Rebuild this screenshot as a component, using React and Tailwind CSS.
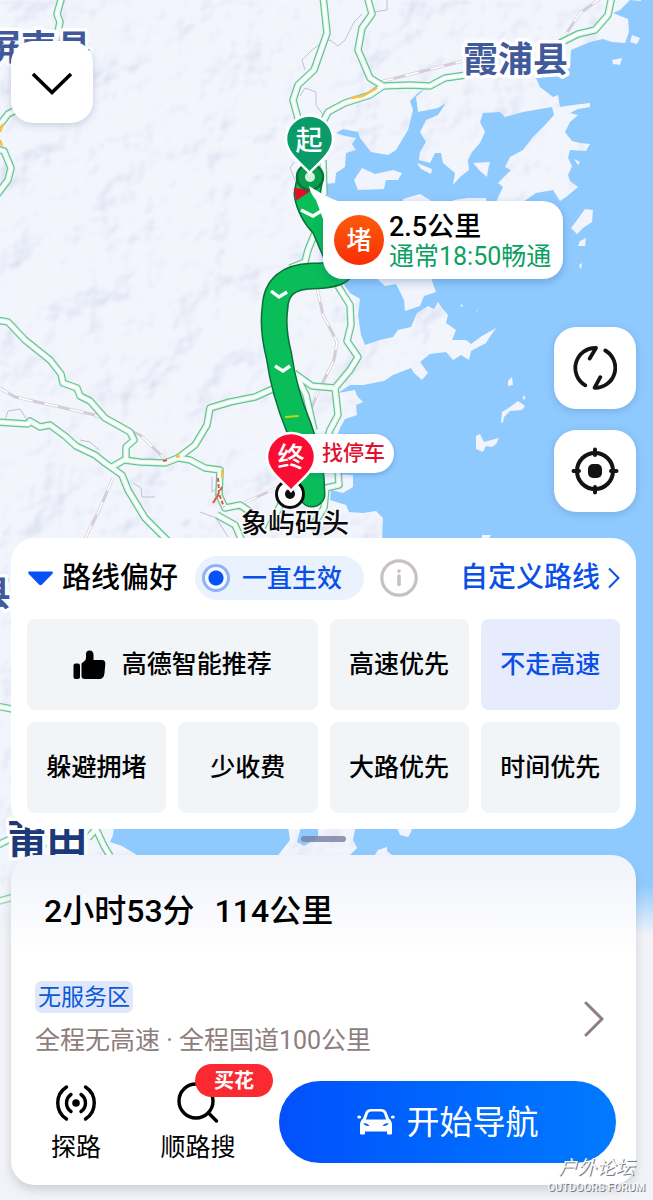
import React from "react";

const roads = [
  "M62 -4L57 14L60 22L55 46",
  "M20 108L8 114L2 122L-4 126",
  "M-4 149L4 151L11 168L8 180L-4 196",
  "M323 -4L327 33L314 70L298 85L293 100L299 122",
  "M367 -4L372 14L362 28L358 50L370 78L383 86L410 85L430 86L445 78L466 75",
  "M383 86L370 95L345 103L328 112L322 124",
  "M612 -4L608 15L595 30L578 34L560 43",
  "M323 160L324 195",
  "M317 228L308 250L305 262L290 268",
  "M-4 320L8 322L25 340L50 360L61 374L63 383L77 388L80 396L90 401L105 418L130 432L134 440L126 447L126 460",
  "M-4 422L28 424L30 421L40 427L50 425L65 436L76 446L95 455L105 463L122 475L128 490L145 518L168 541",
  "M112 467L124 460L140 462L165 463L178 458L190 460L205 468L220 470L219 495L225 508L240 505L252 513",
  "M178 458L195 445L207 425L210 408L230 402L255 397L275 388",
  "M217 515L235 525L242 541",
  "M338 286L350 305L351 325L347 341L358 357L350 370L335 388L312 386L294 373",
  "M335 388L338 415L330 430L326 442",
  "M296 375L306 395L314 430",
  "M338 470L339 485L326 488L324 508L310 530",
  "M284 498L268 530",
  "M-4 576L5 580L-2 590",
  "M-4 706L12 709",
  "M-4 846L12 838L28 846L42 836L52 848",
  "M88 838L96 829L104 846L110 856",
  "M-4 902L14 897",
];

const rails = [
  "M-4 386L15 397L60 407L95 415L140 435L168 462",
  "M113 478L100 508L84 541",
  "M244 503L278 487",
  "M317 288L323 315L337 342L334 360L318 392L310 412",
  "M604 -4L580 13L566 34",
  "M380 82L463 61",
];

const borders = [
  "M305 70L302 60L312 50L323 42L330 40L338 46L345 40L354 22L362 14",
  "M300 96L305 88L316 92L316 105L324 116",
  "M387 -2L387 10L374 12",
  "M294 162L290 168L295 180",
  "M5 420L8 411L20 409L27 420",
  "M80 440L90 442L99 450M133 483L141 488L142 497L155 497",
  "M212 477L212 492L218 487M200 512L216 518L228 537",
];

const sea = [
  "M640 -4L641 1L630 0L620 10L613 13L628 19L629 32L625 43L612 42L603 39L590 42L571 50L570 68L536 78L540 87L553 97L558 95L560 107L573 105L590 103V107L578 109L570 113L578 115L570 122L565 132L572 141L580 143L590 144L586 151L570 150L568 158L572 166L568 175L570 181L578 187L566 197L560 201L553 190L536 193L523 202L496 202L503 187L498 183L511 170L505 167L510 157L523 150L533 137L545 125L554 115L552 107L523 112L505 117L500 112L483 113L480 122L485 132L480 143L472 152L468 160L469 170L460 177L453 185L455 173L443 163L441 153L435 153L430 163L419 160L420 152L426 142L420 132L426 120L438 115L446 103L438 108L418 112L416 97L426 88L418 93L410 101L413 110L408 130L396 150L388 155L371 152L360 138L358 132L343 129L336 133L345 136L356 138L352 144L356 150L346 153L345 167L336 173L335 183L325 184V202L332 230L340 279L350 293L360 299L358 315L361 335L365 345L380 340L393 337L398 330L411 327L417 313L428 306L434 309L438 302L442 308L448 315L446 323L456 330L452 340L466 340L471 344L482 336L496 328L489 338L486 343L471 351L469 360L461 355L453 360L446 352L430 354L420 362L428 373L422 380L414 373L411 368L393 375L384 381L363 385L350 385L338 393L355 390L357 396L363 402L356 405L357 415L345 419L340 428L336 440V474L353 475L353 487L343 493L331 490L330 500L346 505L349 512L363 513L376 511L383 518L382 541L660 541V-4Z",
  "M600 530H660V935H600Z",
  "M115 820L113 835L110 842L122 846L142 858H276L283 849L290 840L287 820Z",
  "M303 820L297 842L304 846L318 838V820Z",
  "M357 820L353 840L357 848L347 858H640V820Z",
];

const islands = [
  "M373 275L385 286L396 284L404 300L405 311L420 306L424 296L436 292L430 275Z",
  "M362 168L375 174L393 170L402 173L398 180L386 180L384 189L358 190L354 180Z",
  "M403 199L420 194L430 200L432 206H403Z",
  "M473 163L490 162L488 170L487 177L480 171Z",
  "M417 163L432 169L431 174L421 169Z",
  "M632 35L640 38L637 44L630 42ZM612 60L622 58L620 65L613 64ZM574 159L580 162L578 165Z",
  "M571 228L580 216L585 209L593 210L592 222L583 228L577 234ZM580 241L586 238L585 246L578 246ZM579 265L582 263L581 270Z",
  "M508 110L512 107L510 115Z",
  "M475 313L479 307L477 311ZM462 304L463 307L460 306Z",
  "M508 381L512 377L513 385L508 386Z",
  "M502 412L510 407L518 401L525 406L522 410L510 411L504 417L503 423L501 422ZM523 395L526 398L523 400Z",
  "M476 436L480 434L484 442L499 438L496 444L492 447L486 446L483 452L476 449Z",
  "M482 535L491 535L488 541H482Z",
  "M454 200L468 198L486 198L487 203H450Z",
  "M396 825H414L410 834L408 837L400 835Z",
  "M373 858L378 850L384 848L387 847L387 851L392 855V858Z",
];

const arrows = ["M301 210L313 216L323 210", "M271 291L279 297L287 292", "M275 366L283 371L290 366"];

const routePath =
  "M310 178L307 194Q310 212 324 226L342 268Q338 276 312 276Q276 277 275 308Q272 328 279 356Q284 392 299 428Q312 462 312 494";

function PlaceName({ x, y, size, fill, children }) {
  return (
    <text
      x={x}
      y={y}
      fontSize={size}
      fill={fill}
      stroke="#fff"
      strokeWidth="7"
      strokeLinejoin="round"
      paintOrder="stroke"
      className="font-bold"
    >
      {children}
    </text>
  );
}

function MapCanvas() {
  return (
    <svg
      className="absolute inset-0 h-full w-full"
      viewBox="0 0 653 1200"
      preserveAspectRatio="xMidYMin slice"
      role="img"
      aria-label="路线地图"
    >
      <defs>
        <filter id="relief" x="0" y="0" width="100%" height="100%" colorInterpolationFilters="sRGB">
          <feTurbulence type="fractalNoise" baseFrequency="0.016" numOctaves="4" seed="23" result="n" />
          <feDiffuseLighting in="n" surfaceScale="9" diffuseConstant="1.25" lightingColor="#fff" result="l">
            <feDistantLight azimuth="225" elevation="58" />
          </feDiffuseLighting>
          <feGaussianBlur stdDeviation="0.8" />
          <feColorMatrix
            type="matrix"
            values="0.34 0 0 0 0.61  0 0.31 0 0 0.65  0 0 0.2 0 0.79  0 0 0 1 0"
          />
        </filter>
        <linearGradient id="fade" x1="0" y1="0" x2="0" y2="1">
          <stop offset="0" stopColor="#f1f3f8" stopOpacity="0" />
          <stop offset="1" stopColor="#f1f3f8" />
        </linearGradient>
      </defs>
      <rect width="653" height="1200" fill="#f2f5fe" />
      <rect width="653" height="940" filter="url(#relief)" opacity="0.6" />
      {sea.map((d) => (
        <path key={d} d={d} fill="#8fcaff" />
      ))}
      {islands.map((d) => (
        <path key={d} d={d} fill="#f1f3fd" />
      ))}
      <g fill="none" strokeLinejoin="round">
        {borders.map((d) => (
          <path key={d} d={d} stroke="#bfc0da" strokeWidth="1" />
        ))}
        {rails.map((d) => (
          <g key={d}>
            <path d={d} stroke="#d6ccd9" strokeWidth="3" />
            <path d={d} stroke="#fff" strokeWidth="1.6" strokeDasharray="14 12" />
          </g>
        ))}
        {roads.map((d) => (
          <path key={d} d={d} stroke="#64c493" strokeWidth="7.6" />
        ))}
        {roads.map((d) => (
          <path key={d} d={d} stroke="#e6f6ee" strokeWidth="5.2" />
        ))}
        {roads.map((d) => (
          <path key={d} d={d} stroke="#fafffc" strokeWidth="2.6" />
        ))}
        <path d="M351 98L363 96L377 88M180 456L176 457M222 470L222 478M0 140L2 146M3 124L0 132" stroke="#f6c146" strokeWidth="2.4" />
        <path d="M218 478L219 492M222 487L215 500M213 503L219 494L224 507M163 461L168 460" stroke="#dd5b45" strokeWidth="2" strokeDasharray="4 2" />
      </g>

      <PlaceName x="-14" y="60" size="35" fill="#405a9b">屏南县</PlaceName>
      <PlaceName x="463" y="72" size="35" fill="#405a9b">霞浦县</PlaceName>
      <PlaceName x="-24" y="606" size="35" fill="#405a9b">县</PlaceName>
      <PlaceName x="7" y="853" size="40" fill="#1c3a7a">莆田</PlaceName>

      <g fill="none" strokeLinecap="round" strokeLinejoin="round">
        <path d={routePath} stroke="#0a6f39" strokeWidth="27" />
        <path d={routePath} stroke="#09bd59" strokeWidth="24" />
        <path d="M295 189L309 191L297 199Z" fill="#e60b26" stroke="#e60b26" strokeWidth="2" />
        {arrows.map((d) => (
          <path key={d} d={d} stroke="#fff" strokeWidth="3.4" strokeLinecap="butt" strokeLinejoin="miter" />
        ))}
        <path d="M286 417L298 416" stroke="#b9d912" strokeWidth="2" />
        <circle cx="310" cy="177" r="13" fill="#0c9c4e" stroke="#067338" strokeWidth="2.5" />
      </g>
      <circle cx="310" cy="177" r="5" fill="#d3f3da" />

      <path
        d="M309.500 173C303 165 286 154 286 139A23.500 23.500 0 0 1 333 139C333 154 316 165 309.500 173Z"
        fill="#0b9b6a"
        stroke="#fff"
        strokeWidth="2.500"
      />
      <text x="309" y="150" fontSize="27" fill="#fff" textAnchor="middle" className="font-medium">起</text>

      <circle cx="290" cy="494" r="13.500" fill="#fff" stroke="#0c0c0c" strokeWidth="3" />
      <circle cx="290" cy="494" r="5" fill="#0c0c0c" />
      <text
        x="295"
        y="533"
        fontSize="27"
        fill="#0a0a0a"
        stroke="#fff"
        strokeOpacity="0.7"
        strokeWidth="3"
        paintOrder="stroke"
        textAnchor="middle"
        className="font-medium"
      >
        象屿码头
      </text>
      <rect y="885" width="653" height="50" fill="url(#fade)" />
      <rect y="935" width="653" height="265" fill="#f1f3f8" />
    </svg>
  );
}

function EndPin() {
  return (
    <svg className="absolute left-[265px] top-[430px] h-16 w-13" viewBox="0 0 52 64" aria-hidden="true">
      <path
        d="M26 61C19 52 2 42 2 27A24 24 0 0 1 50 27C50 42 33 52 26 61Z"
        fill="#fb0d33"
        stroke="#fff"
        strokeWidth="2.500"
      />
      <text x="26" y="37" fontSize="27" fill="#fff" textAnchor="middle" className="font-medium">终</text>
    </svg>
  );
}

function Callout() {
  return (
    <div className="absolute left-[323px] top-[201px] flex h-[78px] w-[240px] items-center gap-[5px] rounded-[20px] bg-white pl-[11px] shadow-[0_3px_8px_rgba(30,80,140,0.3)]">
      <svg className="absolute -left-[15px] -top-4 h-12 w-12" viewBox="0 0 48 48" aria-hidden="true">
        <path d="M1 1Q2 8 8 15L15 34L15 46L40 46L40 16L30 16Q20 13 1 1Z" fill="#fff" />
      </svg>
      <div className="relative flex h-[50px] w-[50px] shrink-0 items-center justify-center rounded-full bg-linear-to-b from-[#fb5a0c] to-[#f92a08] text-[25px] leading-none font-medium text-white">
        堵
      </div>
      <div className="relative pt-1 whitespace-nowrap">
        <div className="text-[27px] leading-[30px] font-medium text-black">2.5公里</div>
        <div className="text-[25px] leading-[30px] text-[#0c9f63]">通常18:50畅通</div>
      </div>
    </div>
  );
}

function FloatButton({ label, children }) {
  return (
    <button
      type="button"
      aria-label={label}
      className="flex h-[82px] w-[82px] items-center justify-center rounded-[22px] bg-white shadow-[0_2px_8px_rgba(40,70,120,0.22)]"
    >
      {children}
    </button>
  );
}

function Preference({ label, wide, active, icon }) {
  return (
    <button
      type="button"
      aria-pressed={!!active}
      className={
        "flex h-[91px] items-center justify-center gap-4 rounded-lg text-[25px] leading-none font-medium whitespace-nowrap " +
        (wide ? "col-span-2 " : "") +
        (active ? "bg-[#e6ecfc] text-[#0a50e6]" : "bg-[#f2f5f7] text-black")
      }
    >
      {icon}
      {label}
    </button>
  );
}

function ThumbIcon() {
  return (
    <svg className="h-[30px] w-[33px]" viewBox="0 0 33 30" fill="#000" aria-hidden="true">
      <rect x="0.500" y="13.500" width="6.500" height="15.500" rx="2" />
      <path d="M8.500 13.500L12 10.500Q13 9.500 13 7.500V4Q13 0.500 16.500 0.500Q20.500 0.500 20.500 5V10H29Q32.500 10 32.300 14L31.500 23Q31 29 26 29H12Q8.500 29 8.500 26Z" />
    </svg>
  );
}

function CarIcon() {
  return (
    <svg className="h-7 w-[38px]" viewBox="0 0 38 28" aria-hidden="true">
      <g fill="#fff">
        <ellipse cx="2.200" cy="9" rx="2" ry="1.600" />
        <ellipse cx="35.800" cy="9" rx="2" ry="1.600" />
        <path
          fillRule="evenodd"
          d="M14 1H24Q28 1 29.500 4L32 10.500Q35 13 35 17V25.500Q35 26.500 34 26.500H31Q30 26.500 30 25.500V23.500H8V25.500Q8 26.500 7 26.500H4Q3 26.500 3 25.500V17Q3 13 6 10.500L8.500 4Q10 1 14 1ZM14 3.500Q12 3.500 11 5.500L9 11.500H29L27 5.500Q26 3.500 24 3.500ZM6.500 15Q7.500 18.500 12.500 18Q10.500 15 6.500 15ZM31.500 15Q30.500 18.500 25.500 18Q27.500 15 31.500 15Z"
        />
      </g>
    </svg>
  );
}

export default function App() {
  return (
    <main className="relative flex min-h-screen flex-col overflow-hidden bg-[#f1f3f8] pr-[17px] pb-[15px] pl-[11px] font-[Roboto,'Noto_Sans_CJK_SC',sans-serif]">
      <MapCanvas />
      <Callout />
      <div className="absolute left-[300px] top-[434px] flex h-[39px] items-center rounded-r-[20px] bg-white pr-[9px] pl-[22px] text-[21px] leading-none font-medium text-[#e0102e] shadow-[0_2px_5px_rgba(30,80,140,0.3)]">
        找停车
      </div>
      <EndPin />

      <div className="relative pt-[41px]">
        <FloatButton label="收起">
          <svg className="h-7 w-[42px]" viewBox="0 -4 42 28" fill="none" stroke="#000" strokeWidth="3.600" aria-hidden="true">
            <path d="M2 2L21 20.500L40 2" />
          </svg>
        </FloatButton>
      </div>
      <div className="relative mt-[204px] flex flex-col items-end gap-[21px]">
        <FloatButton label="刷新路线">
          <svg className="h-11 w-11" viewBox="0 0 44 44" fill="none" stroke="#151212" strokeWidth="3.800" strokeLinecap="round" strokeLinejoin="round" aria-hidden="true">
            <path d="M12.300 39.300A20 20 0 0 1 23 2L16.700 12.500" />
            <path d="M32.300 4.500A20 20 0 0 1 21.500 41.800L27.300 31.200" />
          </svg>
        </FloatButton>
        <FloatButton label="定位">
          <svg className="h-12 w-12" viewBox="0 0 48 48" fill="none" stroke="#151212" strokeWidth="4" strokeLinecap="round" aria-hidden="true">
            <circle cx="24" cy="24" r="18" />
            <path d="M24 2.500V8M24 40V45.500M2.500 24H8M40 24H45.500" />
            <rect x="17" y="17" width="14" height="14" rx="5" fill="#151212" stroke="none" />
          </svg>
        </FloatButton>
      </div>

      <section className="relative mt-[26px] rounded-3xl bg-white px-4 pt-[18px] pb-4">
        <div className="flex h-11 items-center">
          <button type="button" className="flex items-center gap-2 text-[29px] leading-none font-medium whitespace-nowrap text-black">
            <svg className="h-[15px] w-[27px]" viewBox="0 0 27 15" aria-hidden="true">
              <path d="M2.500 0.500H24.500Q27 1 25.200 3L15 13.500Q13.500 15 12 13.500L1.800 3Q0 1 2.500 0.500Z" fill="#0650f5" />
            </svg>
            路线偏好
          </button>
          <label className="ml-[17px] flex h-11 items-center gap-3 rounded-full bg-[#eaf3fd] pr-[22px] pl-[7px] text-[25px] leading-none font-medium whitespace-nowrap text-[#0a50e6]">
            <input
              type="radio"
              name="effective"
              defaultChecked
              className="h-7 w-7 appearance-none rounded-full border-3 border-[#8fb2fb] bg-[radial-gradient(circle,#0650f5_7px,#f4f8ff_8px)]"
            />
            一直生效
          </label>
          <button type="button" aria-label="说明" className="ml-4">
            <svg className="h-[38px] w-[38px]" viewBox="0 0 38 38" fill="none" stroke="#c9c1c1" strokeWidth="3.200" strokeLinecap="round" aria-hidden="true">
              <circle cx="19" cy="19" r="17.200" />
              <path d="M19 17V25.500M19 12V12.300" strokeWidth="3.600" />
            </svg>
          </button>
          <a href="#custom" className="mr-0 ml-auto flex items-center gap-2 text-[28px] leading-none font-medium whitespace-nowrap text-[#0a50e6]">
            自定义路线
            <svg className="h-[22px] w-3" viewBox="0 0 12 22" fill="none" stroke="#0a50e6" strokeWidth="2" aria-hidden="true">
              <path d="M1 1.500L10.500 11L1 20.500" />
            </svg>
          </a>
        </div>
        <div className="mt-[19px] grid grid-cols-4 gap-3">
          <Preference label="高德智能推荐" wide icon={<ThumbIcon />} />
          <Preference label="高速优先" />
          <Preference label="不走高速" active />
          <Preference label="躲避拥堵" />
          <Preference label="少收费" />
          <Preference label="大路优先" />
          <Preference label="时间优先" />
        </div>
      </section>

      <div className="relative flex h-[26px] items-start justify-center pt-[7px]">
        <div className="h-[6px] w-[45px] rounded-full bg-[#75809f]/80" />
      </div>

      <section className="relative rounded-3xl bg-white bg-linear-to-b from-[#f1f3fb] to-white to-[100px] pt-9 pr-5 pb-[22px] pl-6 shadow-[0_5px_10px_rgba(90,90,110,0.22)]">
        <h1 className="flex gap-5 pl-[9px] text-[32px] leading-10 font-medium whitespace-nowrap text-black">
          <span>2小时53分</span>
          <span>114公里</span>
        </h1>
        <a href="#detail" className="mt-[50px] flex items-center justify-between pr-3">
          <div>
            <div className="flex h-8 w-fit items-center rounded-[7px] bg-[#e1e7fa] px-[3px] text-[23px] leading-none text-[#0a5ad8]">
              无服务区
            </div>
            <div className="mt-3 text-[25px] leading-8 whitespace-nowrap text-[#8d7d7d]">
              全程无高速 · 全程国道100公里
            </div>
          </div>
          <svg className="h-9 w-5" viewBox="0 0 20 36" fill="none" stroke="#8d7d7d" strokeWidth="3" strokeLinecap="round" aria-hidden="true">
            <path d="M2 2L18 18L2 34" />
          </svg>
        </a>
        <div className="mt-6 flex items-center gap-10">
          <button type="button" className="flex w-[82px] flex-col items-center gap-2 text-[25px] leading-[30px] text-black">
            <svg className="h-11 w-11" viewBox="0 0 44 44" fill="none" stroke="#000" strokeWidth="3.400" strokeLinecap="round" aria-hidden="true">
              <circle cx="22" cy="22" r="3.800" fill="#000" stroke="none" />
              <path d="M17 13.500A10.300 10.300 0 0 0 17 30.500M27 13.500A10.300 10.300 0 0 1 27 30.500M12.500 6A19 19 0 0 0 12.500 38M31.500 6A19 19 0 0 1 31.500 38" />
            </svg>
            <span>探路</span>
          </button>
          <button type="button" className="relative flex w-[82px] flex-col items-center gap-2 text-[25px] leading-[30px] whitespace-nowrap text-black">
            <svg className="h-11 w-11" viewBox="0 0 44 44" fill="none" stroke="#000" strokeWidth="3.400" strokeLinecap="round" aria-hidden="true">
              <circle cx="20" cy="20" r="17" />
              <path d="M32.500 32L40.500 40" />
            </svg>
            <span>顺路搜</span>
            <span className="absolute -top-[17px] left-[38px] flex h-[33px] w-[78px] items-center justify-center rounded-full bg-[#fb2a30] text-[20px] leading-none font-bold text-white">
              买花
            </span>
          </button>
          <button type="button" className="flex h-[82px] flex-1 items-center justify-center gap-3 rounded-full bg-linear-to-r from-[#0450fc] to-[#037aff] text-[33px] leading-none whitespace-nowrap text-white">
            <CarIcon />
            开始导航
          </button>
        </div>
      </section>

      <div className="absolute right-2 bottom-1 flex flex-col items-center text-[#f8f9fb] [text-shadow:1px_1px_0_#777b82]">
        <div className="text-[19px] leading-6 italic">户外论坛</div>
        <div className="text-[11px] leading-4 font-medium">OUTDOORS FORUM</div>
      </div>
    </main>
  );
}
